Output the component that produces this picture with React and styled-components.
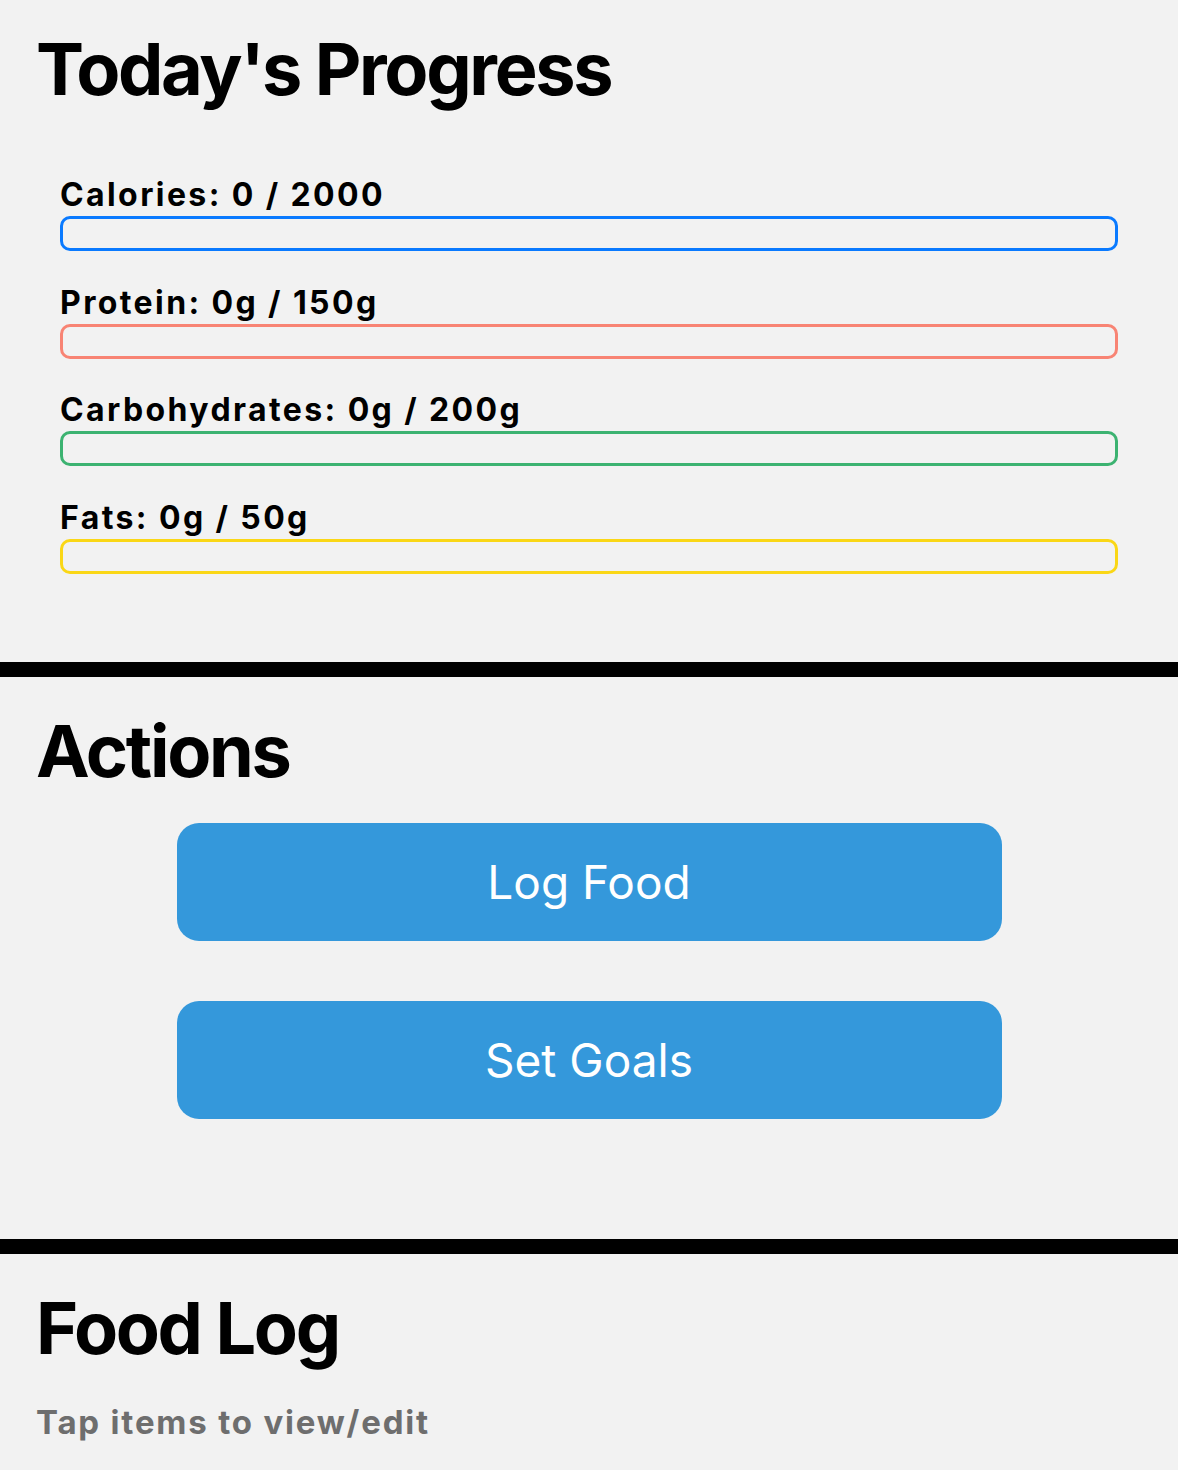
import React from "react";
import styled, { createGlobalStyle } from "styled-components";

const GlobalStyle = createGlobalStyle`
  body {
    margin: 0;
    background: #f2f2f2;
    font-family: Inter, "Noto Sans", sans-serif;
    color: #000;
  }
`;

const goals = [
  { label: "Calories: 0 / 2000", color: "#0a7aff" },
  { label: "Protein: 0g / 150g", color: "#f88474" },
  { label: "Carbohydrates: 0g / 200g", color: "#3cb371" },
  { label: "Fats: 0g / 50g", color: "#fad716" },
];

const App = () => {
  return (
    <Page>
      <GlobalStyle />
      <Section>
        <Title>Today's Progress</Title>
        <Bars>
          {goals.map((g) => (
            <BarItem key={g.label}>
              <BarLabel>{g.label}</BarLabel>
              <Bar color={g.color} />
            </BarItem>
          ))}
        </Bars>
      </Section>
      <Divider />
      <Section>
        <Title>Actions</Title>
        <Buttons>
          <ActionButton>Log Food</ActionButton>
          <ActionButton>Set Goals</ActionButton>
        </Buttons>
      </Section>
      <Divider />
      <Section>
        <Title>Food Log</Title>
        <Hint>Tap items to view/edit</Hint>
      </Section>
    </Page>
  );
};

export default App;

const Page = styled.div`
  display: flex;
  flex-direction: column;
  width: 1178px;
`;

const Section = styled.section`
  padding: 34px 36px 0;
  &:first-child {
    padding-top: 29px;
  }
`;

const Title = styled.h1`
  margin: 0;
  font-size: 72px;
  line-height: 80px;
  font-weight: 700;
  letter-spacing: -2.3px;
`;

const Bars = styled.div`
  display: flex;
  flex-direction: column;
  gap: 33.5px;
  padding: 68px 24px 88px;
`;

const BarItem = styled.div`
  display: flex;
  flex-direction: column;
  gap: 3px;
`;

const BarLabel = styled.div`
  font-size: 32px;
  line-height: 36px;
  font-weight: 700;
  letter-spacing: 2.4px;
`;

const Bar = styled.div`
  height: 35px;
  box-sizing: border-box;
  border: 3px solid ${(props) => props.color};
  border-radius: 10px;
`;

const Divider = styled.div`
  height: 15px;
  background: #000;
`;

const Buttons = styled.div`
  display: flex;
  flex-direction: column;
  align-items: center;
  gap: 60px;
  padding: 32px 0 120px;
`;

const ActionButton = styled.button`
  width: 825px;
  height: 118px;
  border: none;
  border-radius: 22px;
  background: #3498db;
  color: #fff;
  font-family: Inter, "Noto Sans", sans-serif;
  font-size: 46px;
  font-weight: 400;
  cursor: pointer;
`;

const Hint = styled.p`
  margin: 34px 0 0;
  font-size: 33px;
  line-height: 40px;
  font-weight: 700;
  color: #6e6e6e;
  letter-spacing: 1.8px;
`;
